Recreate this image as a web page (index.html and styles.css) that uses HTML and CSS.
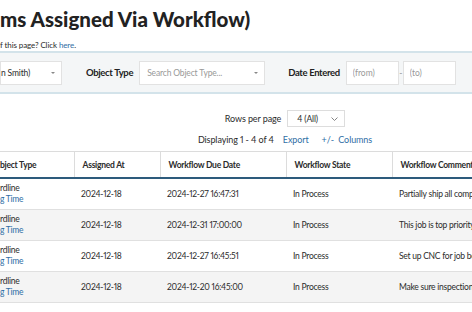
FILE: index.html
```html
<!DOCTYPE html>
<html>
<head>
    <title>My Items</title>
    <link rel="stylesheet" href="styles.css">
</head>
<body>
    <div class="page">
        <h1>ms Assigned Via Workflow)</h1>
        <p class="help">f this page? Click <a href="#">here</a>.</p>

        <div class="filters">
            <div class="select user-select">
                <span>n Smith)</span>
                <span class="caret"></span>
            </div>
            <label class="filter-label">Object Type</label>
            <div class="select type-select">
                <span class="placeholder">Search Object Type...</span>
                <span class="caret"></span>
            </div>
            <label class="filter-label date-label">Date Entered</label>
            <input type="text" class="date-input" placeholder="(from)">
            <span class="dash">-</span>
            <input type="text" class="date-input" placeholder="(to)">
        </div>

        <div class="pager">
            <div class="pager-row">
                <span>Rows per page</span>
                <div class="rows-select">
                    <span>4 (All)</span>
                    <svg width="7" height="4" viewBox="0 0 7 4"><path d="M0.5 0.5 L3.5 3.5 L6.5 0.5" fill="none" stroke="#777" stroke-width="0.9"/></svg>
                </div>
            </div>
            <div class="pager-row">
                <span>Displaying 1 - 4 of 4</span>
                <a href="#" class="pager-link export-link">Export</a>
                <a href="#" class="pager-link columns-link">+/-&nbsp; Columns</a>
            </div>
        </div>

        <table class="items">
            <colgroup>
                <col style="width: 74px">
                <col style="width: 86px">
                <col style="width: 126px">
                <col style="width: 106px">
                <col style="width: 200px">
            </colgroup>
            <thead>
                <tr>
                    <th class="first">bject Type</th>
                    <th>Assigned At</th>
                    <th>Workflow Due Date</th>
                    <th>Workflow State</th>
                    <th>Workflow Comment</th>
                </tr>
            </thead>
            <tbody>
                <tr>
                    <td class="first">rdline<br><a href="#">g Time</a></td>
                    <td>2024-12-18</td>
                    <td>2024-12-27 16:47:31</td>
                    <td>In Process</td>
                    <td>Partially ship all components</td>
                </tr>
                <tr>
                    <td class="first">rdline<br><a href="#">g Time</a></td>
                    <td>2024-12-18</td>
                    <td>2024-12-31 17:00:00</td>
                    <td>In Process</td>
                    <td>This job is top priority</td>
                </tr>
                <tr>
                    <td class="first">rdline<br><a href="#">g Time</a></td>
                    <td>2024-12-18</td>
                    <td>2024-12-27 16:45:51</td>
                    <td>In Process</td>
                    <td>Set up CNC for job before</td>
                </tr>
                <tr>
                    <td class="first">rdline<br><a href="#">g Time</a></td>
                    <td>2024-12-18</td>
                    <td>2024-12-20 16:45:00</td>
                    <td>In Process</td>
                    <td>Make sure inspection is done</td>
                </tr>
            </tbody>
        </table>
    </div>
</body>
</html>
```

FILE: styles.css
```css
body {
    font-family: Lato, "Open Sans", sans-serif;
    font-variant-numeric: proportional-nums;
    color: #2b2b2b;
    background-color: #fff;
    margin: 0;
    overflow: hidden;
}

a {
    color: #2f6ea5;
    text-decoration: none;
}

.page {
    width: 600px;
}

h1 {
    font-size: 20.5px;
    font-weight: 900;
    color: #222;
    margin: 0;
    padding-top: 6px;
    line-height: 26px;
}

.help {
    font-size: 8px;
    letter-spacing: -0.1px;
    margin: 8px 0 0 0;
    line-height: 10px;
}

.filters {
    display: flex;
    align-items: center;
    height: 39px;
    margin-top: 1px;
    background-color: #f4f6f7;
    border-top: 2px solid #d3e3ea;
    border-bottom: 2px solid #d3e3ea;
    font-size: 8.5px;
    letter-spacing: -0.15px;
}

.select {
    display: flex;
    align-items: center;
    justify-content: space-between;
    box-sizing: border-box;
    height: 24px;
    background-color: #fff;
    border: 1px solid #e2e2e2;
    padding: 0 6px 0 7px;
}

.user-select {
    width: 62px;
    padding-left: 0;
}

.type-select {
    width: 126px;
}

.placeholder {
    color: #999;
}

.caret {
    width: 0;
    height: 0;
    border-left: 2px solid transparent;
    border-right: 2px solid transparent;
    border-top: 2px solid #888;
}

.filter-label {
    font-weight: bold;
    font-size: 9.5px;
    letter-spacing: -0.35px;
    color: #222;
    margin: 0 6px 0 24px;
}

.date-label {
    margin-left: 23px;
    margin-right: 6px;
}

.date-input {
    box-sizing: border-box;
    width: 53px;
    height: 24px;
    border: 1px solid #e2e2e2;
    padding: 0 6px;
    font-family: inherit;
    font-size: 8.5px;
}

.date-input::placeholder {
    color: #999;
}

.dash {
    width: 4px;
    text-align: center;
    color: #999;
}

.pager {
    width: 570px;
    display: flex;
    flex-direction: column;
    align-items: center;
    font-size: 9px;
    letter-spacing: -0.1px;
    margin-top: 14px;
}

.pager-row {
    display: flex;
    align-items: center;
    gap: 6px;
    height: 21px;
}

.rows-select {
    display: flex;
    align-items: center;
    justify-content: space-between;
    box-sizing: border-box;
    width: 58px;
    height: 17px;
    border: 1px solid #ddd;
    padding: 0 6px 0 9px;
    font-size: 8.5px;
}

.export-link {
    margin-left: 3px;
}

.columns-link {
    margin-left: 7px;
}

.items {
    border-collapse: collapse;
    table-layout: fixed;
    width: 592px;
    margin-top: 1px;
    font-size: 8.5px;
    letter-spacing: -0.25px;
}

.items th {
    text-align: left;
    font-weight: bold;
    height: 25px;
    padding: 0 8px;
    border-top: 1px solid #dcdcdc;
    border-left: 1px solid #dcdcdc;
    border-bottom: 2px solid #2d5b7c;
    white-space: nowrap;
    overflow: hidden;
}

.items th.first {
    border-left: none;
    padding-left: 0;
}

.items td {
    height: 30px;
    padding: 0 7px;
    border-bottom: 1px solid #e0e0e0;
    line-height: 11px;
    white-space: nowrap;
    overflow: hidden;
}

.items td.first {
    padding-left: 0;
}

.items tbody tr:nth-child(even) {
    background-color: #f4f4f4;
}
```
